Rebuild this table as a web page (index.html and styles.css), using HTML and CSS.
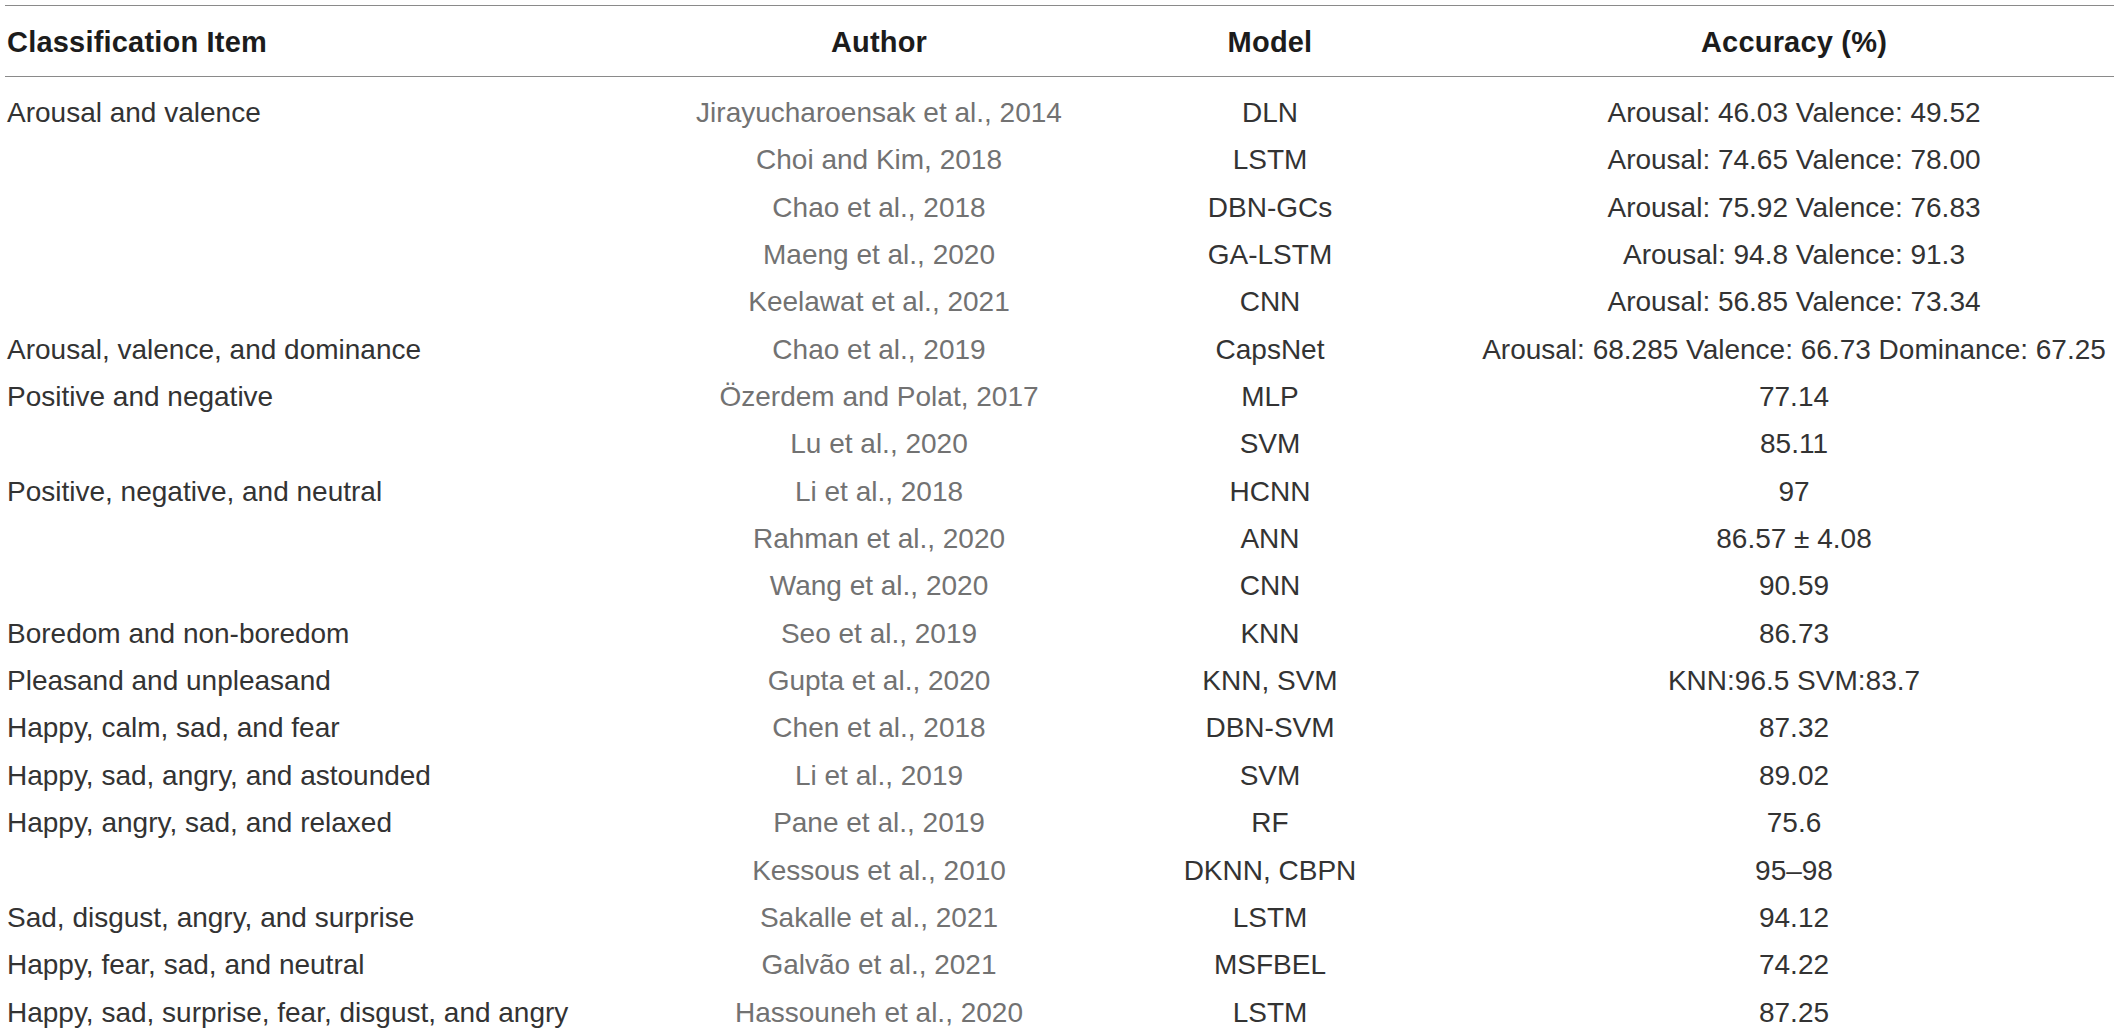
FILE: index.html
```html
<!DOCTYPE html>
<html lang="en">
<head>
<meta charset="utf-8">
<title>Classification accuracy</title>
<link rel="stylesheet" href="styles.css">
</head>
<body>
<table class="results">
  <colgroup>
    <col class="c-item">
    <col class="c-author">
    <col class="c-model">
    <col class="c-acc">
  </colgroup>
  <thead>
    <tr>
      <th class="item">Classification Item</th>
      <th>Author</th>
      <th>Model</th>
      <th>Accuracy (%)</th>
    </tr>
  </thead>
  <tbody>
    <tr class="first"><td class="item">Arousal and valence</td><td class="author">Jirayucharoensak et al., 2014</td><td>DLN</td><td>Arousal: 46.03 Valence: 49.52</td></tr>
    <tr><td class="item"></td><td class="author">Choi and Kim, 2018</td><td>LSTM</td><td>Arousal: 74.65 Valence: 78.00</td></tr>
    <tr><td class="item"></td><td class="author">Chao et al., 2018</td><td>DBN-GCs</td><td>Arousal: 75.92 Valence: 76.83</td></tr>
    <tr><td class="item"></td><td class="author">Maeng et al., 2020</td><td>GA-LSTM</td><td>Arousal: 94.8 Valence: 91.3</td></tr>
    <tr><td class="item"></td><td class="author">Keelawat et al., 2021</td><td>CNN</td><td>Arousal: 56.85 Valence: 73.34</td></tr>
    <tr><td class="item">Arousal, valence, and dominance</td><td class="author">Chao et al., 2019</td><td>CapsNet</td><td>Arousal: 68.285 Valence: 66.73 Dominance: 67.25</td></tr>
    <tr><td class="item">Positive and negative</td><td class="author">Özerdem and Polat, 2017</td><td>MLP</td><td>77.14</td></tr>
    <tr><td class="item"></td><td class="author">Lu et al., 2020</td><td>SVM</td><td>85.11</td></tr>
    <tr><td class="item">Positive, negative, and neutral</td><td class="author">Li et al., 2018</td><td>HCNN</td><td>97</td></tr>
    <tr><td class="item"></td><td class="author">Rahman et al., 2020</td><td>ANN</td><td>86.57 ± 4.08</td></tr>
    <tr><td class="item"></td><td class="author">Wang et al., 2020</td><td>CNN</td><td>90.59</td></tr>
    <tr><td class="item">Boredom and non-boredom</td><td class="author">Seo et al., 2019</td><td>KNN</td><td>86.73</td></tr>
    <tr><td class="item">Pleasand and unpleasand</td><td class="author">Gupta et al., 2020</td><td>KNN, SVM</td><td>KNN:96.5 SVM:83.7</td></tr>
    <tr><td class="item">Happy, calm, sad, and fear</td><td class="author">Chen et al., 2018</td><td>DBN-SVM</td><td>87.32</td></tr>
    <tr><td class="item">Happy, sad, angry, and astounded</td><td class="author">Li et al., 2019</td><td>SVM</td><td>89.02</td></tr>
    <tr><td class="item">Happy, angry, sad, and relaxed</td><td class="author">Pane et al., 2019</td><td>RF</td><td>75.6</td></tr>
    <tr><td class="item"></td><td class="author">Kessous et al., 2010</td><td>DKNN, CBPN</td><td>95–98</td></tr>
    <tr><td class="item">Sad, disgust, angry, and surprise</td><td class="author">Sakalle et al., 2021</td><td>LSTM</td><td>94.12</td></tr>
    <tr><td class="item">Happy, fear, sad, and neutral</td><td class="author">Galvão et al., 2021</td><td>MSFBEL</td><td>74.22</td></tr>
    <tr><td class="item">Happy, sad, surprise, fear, disgust, and angry</td><td class="author">Hassouneh et al., 2020</td><td>LSTM</td><td>87.25</td></tr>
  </tbody>
</table>
</body>
</html>
```

FILE: styles.css
```css
html, body {
  margin: 0;
  padding: 0;
  background: #ffffff;
  overflow: hidden;
}

body {
  padding: 5px 4px 0 5px;
  font-family: "Liberation Sans", Arial, sans-serif;
  font-size: 28px;
  color: #333333;
}

.results {
  border-collapse: collapse;
  table-layout: fixed;
  width: 2109px;
}

.c-item { width: 687px; }
.c-author { width: 374px; }
.c-model { width: 408px; }
.c-acc { width: 640px; }

.results th,
.results td {
  padding: 0;
  text-align: center;
  white-space: nowrap;
}

.results th.item,
.results td.item {
  text-align: left;
  padding-left: 2px;
}

.results thead th {
  border-top: 1px solid #8a8a8a;
  border-bottom: 1px solid #8a8a8a;
  height: 70px;
  padding-top: 2px;
  line-height: 68px;
  font-size: 29px;
  letter-spacing: 0.2px;
  font-weight: 700;
  color: #1c1c1c;
  box-sizing: border-box;
}

.results tbody tr {
  height: 47.34px;
}

.results tbody td {
  line-height: 47.34px;
  height: 47.34px;
}

.results tbody tr.first td {
  padding-top: 12px;
}

.results td.author {
  color: #727272;
}
```
